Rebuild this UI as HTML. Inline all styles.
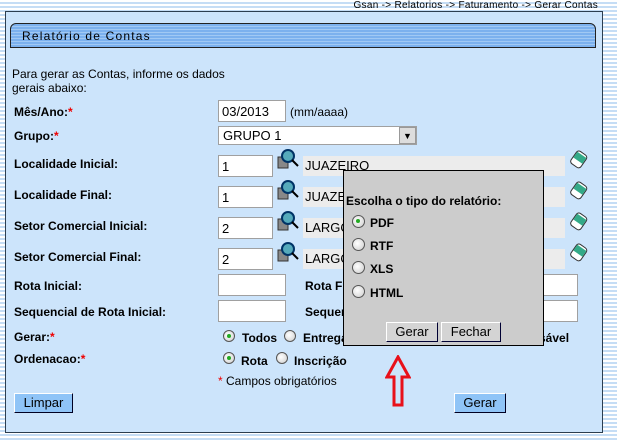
<!DOCTYPE html><html><head><meta charset="utf-8"><style>
*{margin:0;padding:0;box-sizing:border-box}
body{width:617px;height:440px;overflow:hidden;position:relative;font-family:"Liberation Sans",Arial,sans-serif;font-size:12px;color:#000;
background:repeating-linear-gradient(to bottom,#fff 0,#fff 2px,#c5ddf5 2px,#c5ddf5 4px);}
.a{position:absolute;white-space:nowrap}
.b{font-weight:bold}
.r{color:#e00}
.in{position:absolute;background:#fff;border:1px solid #a0a0a0;height:22px;padding:3px 3px;font-size:13px}
.desc{position:absolute;background:#ececec;height:20px;font-size:13px;padding:2px 2px;overflow:hidden}
.rad{position:absolute;width:12px;height:12px;border-radius:50%;border:1px solid #555;background:radial-gradient(circle at 40% 40%,#fff,#ccc)}
.rad.on::after{content:"";position:absolute;left:3px;top:3px;width:4px;height:4px;border-radius:50%;background:#2a2}
.btn{position:absolute;height:20px;font-size:13px;text-align:center;line-height:18px;border:1px solid;border-color:#fff #003 #003 #fff}
</style></head><body>
<div class="a" style="right:19px;top:0;font-size:10px;letter-spacing:0.3px">Gsan -&gt; Relatorios -&gt; Faturamento -&gt; Gerar Contas</div>
<div class="a" style="left:5px;top:11px;width:598px;height:422px;background:#cce4fb;border:1px solid #2c3e50"></div>
<div class="a" style="left:10px;top:23px;width:586px;height:25px;border:1px solid #222;border-radius:6px 6px 0 0;background:repeating-linear-gradient(to bottom,#7cb1ee 0,#7cb1ee 2px,#a1c9f4 2px,#a1c9f4 3px)"></div>
<div class="a" style="left:22px;top:29px;font-size:12px;letter-spacing:1.2px">Relatório de Contas</div>
<div class="a" style="left:12px;top:67px;line-height:14px">Para gerar as Contas, informe os dados<br>gerais abaixo:</div>

<div class="a b" style="left:14px;top:105px">Mês/Ano:<span class="r">*</span></div>
<div class="in" style="left:218px;top:100px;width:68px">03/2013</div>
<div class="a" style="left:290px;top:105px">(mm/aaaa)</div>

<div class="a b" style="left:14px;top:129px">Grupo:<span class="r">*</span></div>
<div class="in" style="left:218px;top:126px;width:199px;height:19px;padding:1px 4px">GRUPO 1</div>
<div class="a" style="left:399px;top:127px;width:17px;height:17px;background:#ddd;border:1px solid #999;font-size:9px;text-align:center;line-height:16px">&#9660;</div>

<div class="a b" style="left:14px;top:157px">Localidade Inicial:</div>
<div class="a b" style="left:14px;top:188px">Localidade Final:</div>
<div class="a b" style="left:14px;top:219px">Setor Comercial Inicial:</div>
<div class="a b" style="left:14px;top:250px">Setor Comercial Final:</div>

<div class="in" style="left:218px;top:155px;width:55px">1</div>
<div class="in" style="left:218px;top:186px;width:55px">1</div>
<div class="in" style="left:218px;top:217px;width:55px">2</div>
<div class="in" style="left:218px;top:248px;width:55px">2</div>

<div class="desc" style="left:303px;top:156px;width:262px">JUAZEIRO</div>
<div class="desc" style="left:303px;top:187px;width:262px">JUAZEIRO</div>
<div class="desc" style="left:303px;top:218px;width:262px">LARGO</div>
<div class="desc" style="left:303px;top:249px;width:262px">LARGO</div>

<svg class="a" style="left:277px;top:148px" width="24" height="124" viewBox="0 0 24 124">
<g id="m"><rect x="1" y="9" width="10" height="11" fill="#888" stroke="#333"/><circle cx="11" cy="8" r="6" fill="#5ab" stroke="#036" stroke-width="2"/><line x1="15" y1="12" x2="21" y2="18" stroke="#000" stroke-width="2"/></g>
<use href="#m" y="31"/><use href="#m" y="62"/><use href="#m" y="93"/>
</svg>
<svg class="a" style="left:570px;top:150px" width="20" height="120" viewBox="0 0 20 120">
<g id="e"><g transform="rotate(35 9 9)"><rect x="3" y="2" width="12" height="15" rx="3" fill="#fff" stroke="#333"/><rect x="3.5" y="4" width="11" height="7" fill="#3a8"/></g></g>
<use href="#e" y="31"/><use href="#e" y="62"/><use href="#e" y="93"/>
</svg>

<div class="a b" style="left:14px;top:279px">Rota Inicial:</div>
<div class="in" style="left:218px;top:274px;width:68px"></div>
<div class="a b" style="left:305px;top:279px">Rota Final:</div>
<div class="in" style="left:540px;top:274px;width:38px"></div>

<div class="a b" style="left:14px;top:305px">Sequencial de Rota Inicial:</div>
<div class="in" style="left:218px;top:300px;width:68px"></div>
<div class="a b" style="left:305px;top:305px">Sequencial:</div>
<div class="in" style="left:540px;top:300px;width:38px"></div>

<div class="a b" style="left:14px;top:330px">Gerar:<span class="r">*</span></div>
<div class="rad on" style="left:223px;top:330px"></div><div class="a b" style="left:242px;top:331px">Todos</div>
<div class="rad" style="left:284px;top:330px"></div><div class="a b" style="left:303px;top:331px">Entrega</div>
<div class="a b" style="left:539px;top:331px">sável</div>

<div class="a b" style="left:14px;top:352px">Ordenacao:<span class="r">*</span></div>
<div class="rad on" style="left:223px;top:352px"></div><div class="a b" style="left:241px;top:354px">Rota</div>
<div class="rad" style="left:276px;top:352px"></div><div class="a b" style="left:294px;top:354px">Inscrição</div>

<div class="a" style="left:218px;top:374px"><span class="r">*</span> Campos obrigatórios</div>

<div class="btn" style="left:14px;top:393px;width:59px;background:#8fc4f7;border-color:#fff #002 #002 #fff">Limpar</div>
<div class="btn" style="left:454px;top:393px;width:52px;background:#8fc4f7;border-color:#fff #002 #002 #fff">Gerar</div>

<div class="a" style="left:343px;top:170px;width:201px;height:176px;background:#cccccc;border:1px solid #000"></div>
<div class="a b" style="left:346px;top:194px">Escolha o tipo do relatório:</div>
<div class="rad on" style="left:352px;top:215px;width:13px;height:13px"></div><div class="a b" style="left:370px;top:216px">PDF</div>
<div class="rad" style="left:352px;top:238px;width:13px;height:13px"></div><div class="a b" style="left:370px;top:239px">RTF</div>
<div class="rad" style="left:352px;top:261px;width:13px;height:13px"></div><div class="a b" style="left:370px;top:262px">XLS</div>
<div class="rad" style="left:352px;top:285px;width:13px;height:13px"></div><div class="a b" style="left:370px;top:286px">HTML</div>
<div class="btn" style="left:386px;top:322px;width:52px;background:#d4d4d4">Gerar</div>
<div class="btn" style="left:441px;top:322px;width:60px;background:#d4d4d4">Fechar</div>

<svg class="a" style="left:385px;top:355px" width="26" height="52" viewBox="0 0 26 52">
<path d="M13 2 L24 22 L17 22 L17 50 L9 50 L9 22 L2 22 Z" fill="none" stroke="#e8101a" stroke-width="3" stroke-linejoin="miter"/>
</svg>
</body></html>
